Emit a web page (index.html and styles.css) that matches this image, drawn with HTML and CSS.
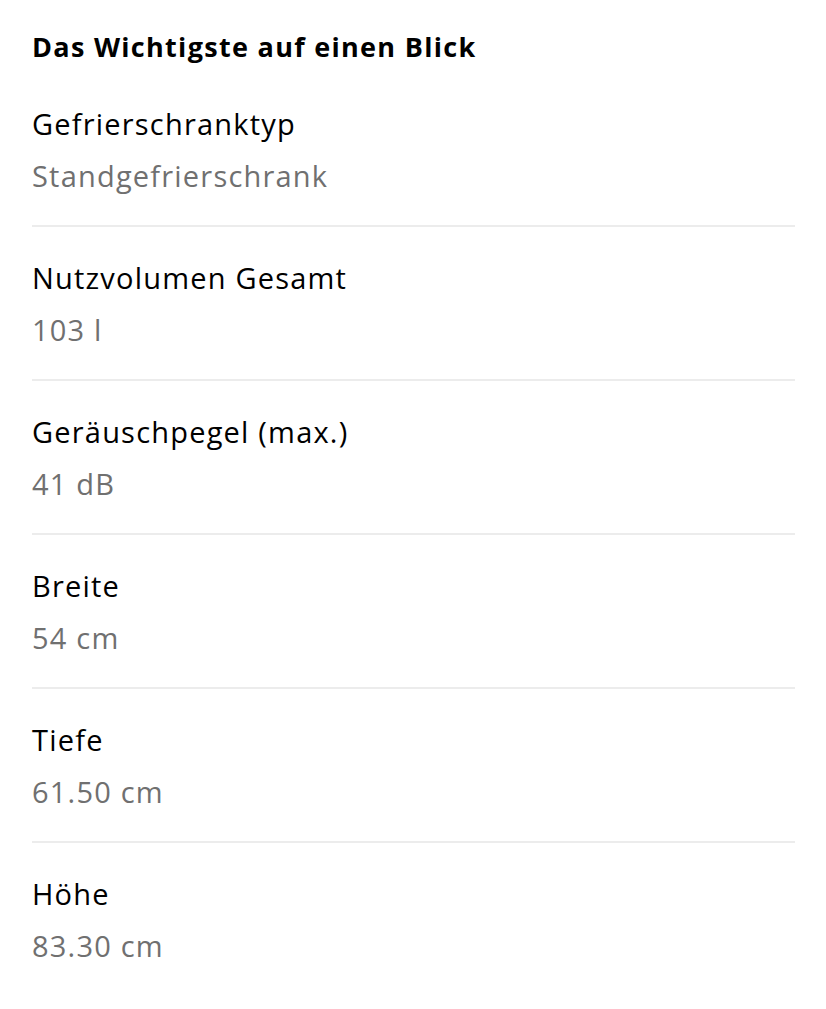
FILE: index.html
```html
<!DOCTYPE html>
<html>
<head>
  <title>Das Wichtigste auf einen Blick</title>
  <link rel="stylesheet" href="styles.css">
</head>
<body>
  <div class="container">
    <h2 class="title">Das Wichtigste auf einen Blick</h2>
    <div class="facts">
      <div class="fact">
        <div class="label">Gefrierschranktyp</div>
        <div class="value">Standgefrierschrank</div>
      </div>
      <div class="fact">
        <div class="label">Nutzvolumen Gesamt</div>
        <div class="value">103 l</div>
      </div>
      <div class="fact">
        <div class="label">Geräuschpegel (max.)</div>
        <div class="value">41 dB</div>
      </div>
      <div class="fact">
        <div class="label">Breite</div>
        <div class="value">54 cm</div>
      </div>
      <div class="fact">
        <div class="label">Tiefe</div>
        <div class="value">61.50 cm</div>
      </div>
      <div class="fact last">
        <div class="label">Höhe</div>
        <div class="value">83.30 cm</div>
      </div>
    </div>
  </div>
</body>
</html>
```

FILE: styles.css
```css
* {box-sizing: border-box}
body {
  margin: 0;
  background: #fff;
  font-family: "Open Sans", Lato, sans-serif;
  color: #000;
}
.container {padding: 27px 31px 0 32px;}
.title {
  margin: 0 0 31px 0;
  font-size: 27px;
  line-height: 40px;
  font-weight: 700;
  letter-spacing: 1.3px;
}
.fact {
  padding: 0 0 23px 0;
  margin-bottom: 25px;
  border-bottom: 2px solid #ececec;
}
.fact.last {border-bottom: none;}
.label, .value {
  font-size: 29px;
  line-height: 52px;
  font-weight: 500;
  letter-spacing: 1.2px;
}
.value {color: #707070;}
```
